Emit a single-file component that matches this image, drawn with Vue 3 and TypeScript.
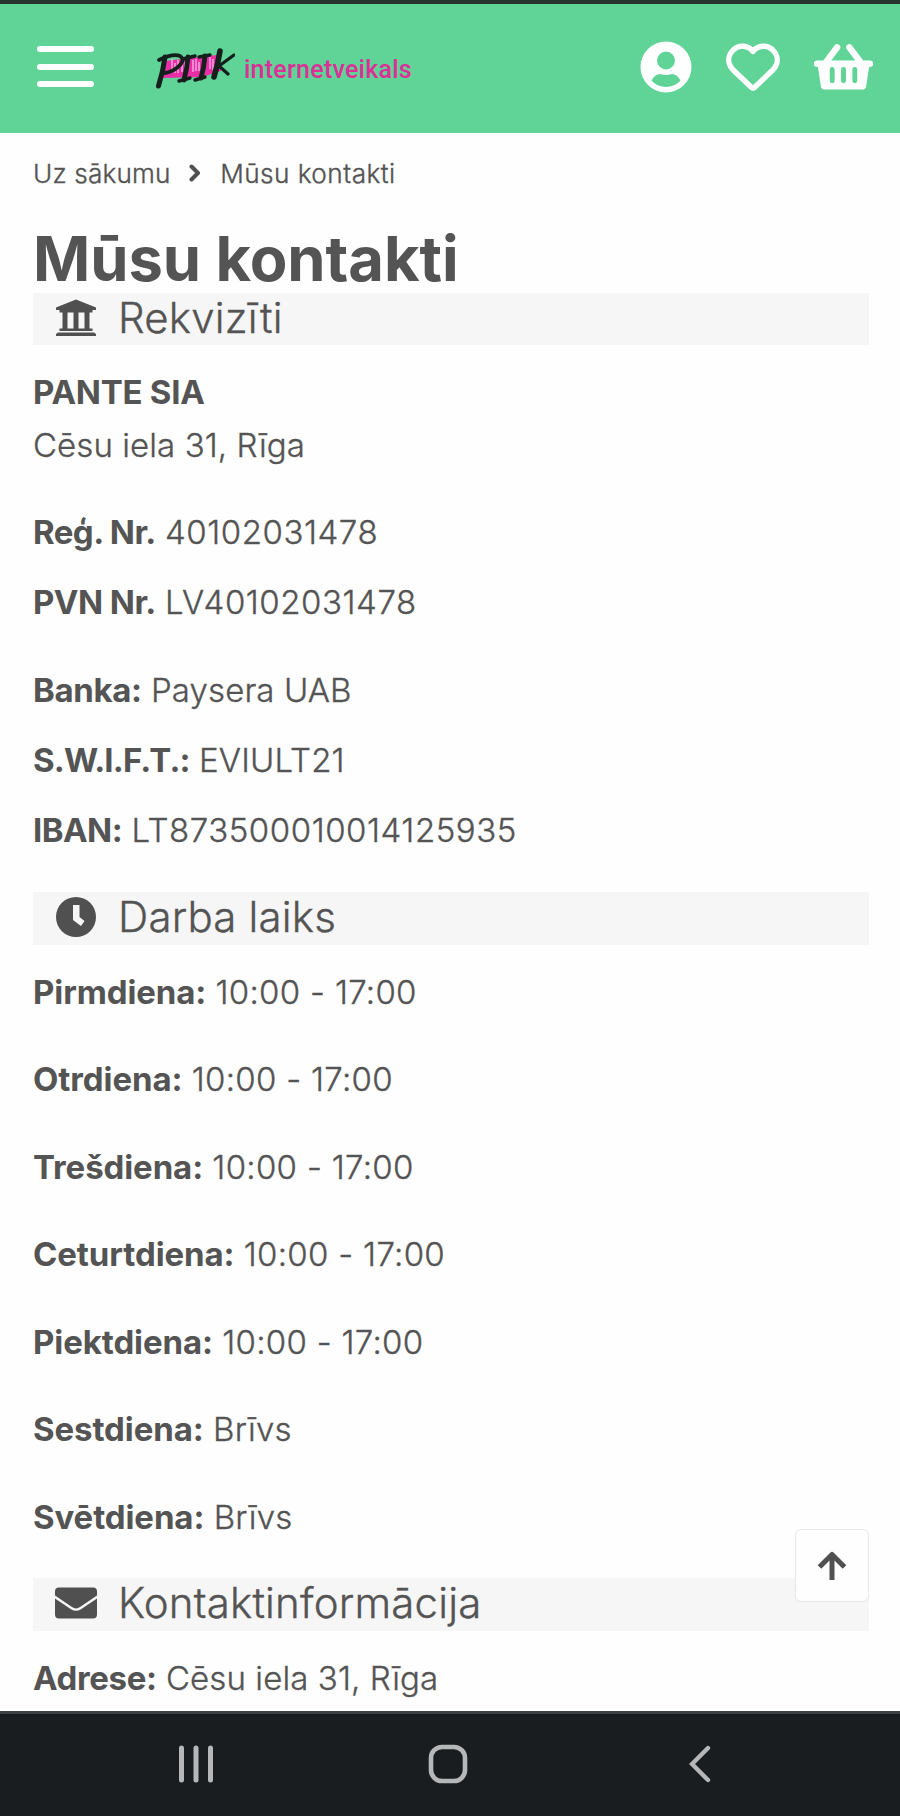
<script setup lang="ts">
interface Row {
  label: string
  value: string
  kind?: string
}

const registration: Row[] = [
  { label: 'Reģ. Nr.', value: '40102031478', kind: 'code' },
  { label: 'PVN Nr.', value: 'LV40102031478', kind: 'code' },
]

const bank: Row[] = [
  { label: 'Banka:', value: 'Paysera UAB', kind: 'tight' },
  { label: 'S.W.I.F.T.:', value: 'EVIULT21', kind: 'dotted' },
  { label: 'IBAN:', value: 'LT873500010014125935', kind: 'code' },
]

const hours: Row[] = [
  { label: 'Pirmdiena:', value: '10:00 - 17:00' },
  { label: 'Otrdiena:', value: '10:00 - 17:00' },
  { label: 'Trešdiena:', value: '10:00 - 17:00' },
  { label: 'Ceturtdiena:', value: '10:00 - 17:00' },
  { label: 'Piektdiena:', value: '10:00 - 17:00' },
  { label: 'Sestdiena:', value: 'Brīvs' },
  { label: 'Svētdiena:', value: 'Brīvs' },
]
</script>

<template>
  <div class="screen">
    <header class="header">
      <button class="menu" aria-label="Izvēlne"><span /><span /><span /></button>
      <a class="logo">
        <svg class="mark" width="80" height="42" viewBox="0 0 80 42">
          <path d="M10 13 L62 7 L66 23 L47 29 L8 30Z" fill="#ea2fa6" />
          <path d="M17 11v14M20 15v10M23 12v13M27 11v13M30 14v12M38 12v12M41 11v12M44 14v9M49 11v10M55 9v12M58 11v11" stroke="#f7a6e0" stroke-width="1.5" />
          <g fill="none" stroke="#15201d" stroke-linecap="round" stroke-linejoin="round">
            <path d="M10 9 Q8 24 3.500 38" stroke-width="5" />
            <path d="M4 12 Q18 5 25 8 Q31 12 23 19 Q17 24 10 25" stroke-width="3.800" />
            <path d="M33 9 Q32 21 29 32" stroke-width="4.800" />
            <path d="M28 11 L40 8 M24 33 L35 30" stroke-width="3.400" />
            <path d="M50 8 Q49 20 46 30" stroke-width="4.800" />
            <path d="M44 9 L55 7 M40 32 L50 29" stroke-width="3.400" />
            <path d="M65 3 Q63 16 59 29" stroke-width="5.600" />
            <path d="M79 7 L64 18 L73 26" stroke-width="3.200" />
          </g>
        </svg>
        <span class="wordmark">internetveikals</span>
      </a>
      <nav class="actions">
        <svg class="user" viewBox="0 0 52 52">
          <path fill-rule="evenodd" fill="#fff" d="M26 0.500a25.500 25.500 0 1 0 0 51a25.500 25.500 0 1 0 0-51ZM26 10.500a9 9 0 1 1 0 18a9 9 0 1 1 0-18ZM11.500 39.500C14 35 17 33 20 33Q26 34.800 32 33C35 33 38 35 40.500 39.500C33 48 19 48 11.500 39.500Z" />
        </svg>
        <svg class="heart" viewBox="0 0 54 48">
          <path d="M27 8.500C22.500 2.500 13.500 1.200 7.800 6.500C1.200 12.600 1.200 20.500 7.200 27L25.300 44.300Q27 45.800 28.700 44.300L46.800 27C52.800 20.500 52.800 12.600 46.200 6.500C40.500 1.200 31.500 2.500 27 8.500Z" fill="none" stroke="#fff" stroke-width="5.400" stroke-linejoin="round" />
        </svg>
        <svg class="basket" viewBox="0 0 60 48">
          <path d="M23.500 4L13 18M36 4L46.500 18" stroke="#fff" stroke-width="6.600" stroke-linecap="round" />
          <path fill="#fff" d="M3 17.500H57a3 3 0 0 1 0 6.500H56L53 43.500a4 4 0 0 1-4 3.500H11a4 4 0 0 1-4-3.500L4 24H3a3 3 0 0 1 0-6.500Z" />
          <path d="M18.500 26.500V38M30 26.500V38M41.500 26.500V38" stroke="#60d397" stroke-width="5" stroke-linecap="round" />
        </svg>
      </nav>
    </header>

    <main class="page">
      <nav class="crumbs">
        <a>Uz sākumu</a>
        <svg width="12" height="18" viewBox="0 0 12 18"><path d="M2.500 2.500L9 9L2.500 15.500" fill="none" stroke="#505050" stroke-width="4" stroke-linecap="round" stroke-linejoin="round" /></svg>
        <span>Mūsu kontakti</span>
      </nav>

      <h1>Mūsu kontakti</h1>

      <h2>
        <svg class="icon" viewBox="0 0 42 42">
          <path d="M21 2.500L41 10.500V13H37.500V15.500H4.500V13H1V10.500ZM7.500 15.500H12.500V31.500H18.500V15.500H23.500V31.500H29.500V15.500H34.500V31.500H37.500V34H4.500V31.500H7.500ZM3 35.500H39L41 37V39H1V37Z" />
        </svg>
        <span>Rekvizīti</span>
      </h2>
      <p class="address"><b>PANTE SIA</b><br />Cēsu iela 31, Rīga</p>
      <div class="group">
        <p v-for="row in registration" :key="row.label" :class="row.kind"><b>{{ row.label }}</b> <span>{{ row.value }}</span></p>
      </div>
      <div class="group last">
        <p v-for="row in bank" :key="row.label" :class="row.kind"><b>{{ row.label }}</b> <span>{{ row.value }}</span></p>
      </div>

      <h2>
        <svg class="icon" viewBox="0 0 42 42">
          <path fill-rule="evenodd" d="M21 1a20 20 0 1 0 0 40a20 20 0 1 0 0-40ZM18 9H24.500V21L29.500 25L26 30L18 24Z" />
        </svg>
        <span>Darba laiks</span>
      </h2>
      <p v-for="row in hours" :key="row.label" class="time"><b>{{ row.label }}</b> <span>{{ row.value }}</span></p>

      <h2>
        <svg class="icon" viewBox="0 0 42 42">
          <path d="M4 5.500H38a4 4 0 0 1 4 4V13.500L25 25Q21 27.800 17 25L0 13.500V9.500a4 4 0 0 1 4-4ZM0 16.500L16 27.200Q21 30.500 26 27.200L42 16.500V32.500a4 4 0 0 1-4 4H4a4 4 0 0 1-4-4Z" />
        </svg>
        <span>Kontaktinformācija</span>
      </h2>
      <p class="tight"><b>Adrese:</b> <span>Cēsu iela 31, Rīga</span></p>
    </main>

    <button class="to-top" aria-label="Uz augšu">
      <svg width="30" height="32" viewBox="0 0 30 32"><path d="M15 30V4M2.500 17L15 4.500L27.500 17" fill="none" stroke="#505050" stroke-width="5" stroke-linejoin="round" /></svg>
    </button>

    <footer class="system">
      <svg width="36" height="38" viewBox="0 0 36 38"><path d="M3.500 3V35M18 3V35M32.500 3V35" stroke="#b5b7b8" stroke-width="5" stroke-linecap="round" /></svg>
      <svg width="40" height="40" viewBox="0 0 40 40"><rect x="3" y="3" width="34" height="34" rx="11" fill="none" stroke="#b5b7b8" stroke-width="4.600" /></svg>
      <svg width="22" height="38" viewBox="0 0 22 38"><path d="M19 3L3 19L19 35" fill="none" stroke="#b5b7b8" stroke-width="4.400" stroke-linecap="round" stroke-linejoin="miter" /></svg>
    </footer>
  </div>
</template>

<style>
body {
  margin: 0;
}
</style>

<style scoped>
.screen {
  position: relative;
  display: flex;
  flex-direction: column;
  box-sizing: border-box;
  width: 900px;
  height: 1816px;
  overflow: hidden;
  background: #fefefe;
  color: #545454;
  font-family: Inter, "Liberation Sans", sans-serif;
  font-size: 33px;
  font-weight: 300;
  -webkit-text-stroke: 0.350px #545454;
}
button {
  padding: 0;
  border: 0;
  background: none;
}
.header {
  display: flex;
  align-items: flex-start;
  flex: none;
  box-sizing: border-box;
  height: 133px;
  border-top: 4px solid #27342f;
  background: #60d397;
}
.menu {
  display: flex;
  flex-direction: column;
  gap: 11.500px;
  width: 57px;
  margin: 42px 0 0 37px;
}
.menu span {
  height: 6px;
  border-radius: 3px;
  background: #fff;
}
.logo {
  display: flex;
  margin: 44px 0 0 61px;
}
.wordmark {
  margin: 7px 0 0 9px;
  color: #dc3097;
  font-family: Roboto, sans-serif;
  font-size: 25px;
  font-weight: 500;
  line-height: 30px;
  letter-spacing: 0.250px;
  -webkit-text-stroke: 0;
}
.actions {
  display: flex;
  align-items: flex-start;
  margin: 37px 27px 0 auto;
}
.user {
  width: 52px;
  height: 52px;
}
.heart {
  width: 54px;
  height: 48px;
  margin: 2px 0 0 34px;
}
.basket {
  width: 59px;
  height: 48px;
  margin: 2px 0 0 34px;
}
.page {
  flex: 1;
  min-height: 0;
  padding: 20px 31px 0 33px;
}
.crumbs {
  display: flex;
  align-items: center;
  height: 40px;
  margin-bottom: 33px;
  font-size: 26.200px;
  letter-spacing: 0.150px;
}
.crumbs span {
  letter-spacing: 0.450px;
}
.crumbs svg {
  margin: 0 19px 0 18.500px;
}
h1 {
  height: 66.500px;
  margin: 0;
  font-size: 61.500px;
  font-weight: 700;
  line-height: 66px;
  letter-spacing: -0.080px;
  -webkit-text-stroke: 0;
}
h2 {
  display: flex;
  align-items: center;
  box-sizing: border-box;
  height: 52.500px;
  margin: 0 0 21px;
  padding-bottom: 2px;
  background: #f6f6f6;
  font-size: 42px;
  font-weight: 300;
  line-height: 50px;
  letter-spacing: 0.200px;
}
.icon {
  width: 42px;
  height: 42px;
  margin: 0 21.500px;
  fill: #505050;
}
p {
  margin: 0 0 35px;
  line-height: 52.500px;
}
b {
  font-weight: 700;
  letter-spacing: -0.100px;
  -webkit-text-stroke: 0;
}
.address {
  letter-spacing: 0.080px;
}
.address b {
  letter-spacing: -0.250px;
}
.code b {
  letter-spacing: -0.550px;
}
.code span {
  letter-spacing: 0.550px;
}
.time span {
  letter-spacing: 0.300px;
}
.dotted b {
  letter-spacing: -0.850px;
}
.dotted span {
  letter-spacing: 0.150px;
}
.tight b {
  letter-spacing: -0.350px;
}
.tight span {
  letter-spacing: 0.100px;
}
.group p {
  margin-bottom: 17.500px;
}
.group p:last-child {
  margin-bottom: 35px;
}
.group.last p:last-child {
  margin-bottom: 36px;
}
.to-top {
  position: absolute;
  top: 1529px;
  left: 795px;
  display: flex;
  align-items: center;
  justify-content: center;
  box-sizing: border-box;
  width: 74px;
  height: 73px;
  border: 1px solid #e8e8e8;
  border-radius: 6px;
  background: #fefefe;
}
.system {
  display: flex;
  align-items: center;
  flex: none;
  box-sizing: border-box;
  height: 105px;
  padding: 0 0 2px 178px;
  border-top: 3px solid #3c4243;
  background: #191d20;
}
.system svg:nth-child(2) {
  margin: 0 221px 0 214px;
}
</style>
